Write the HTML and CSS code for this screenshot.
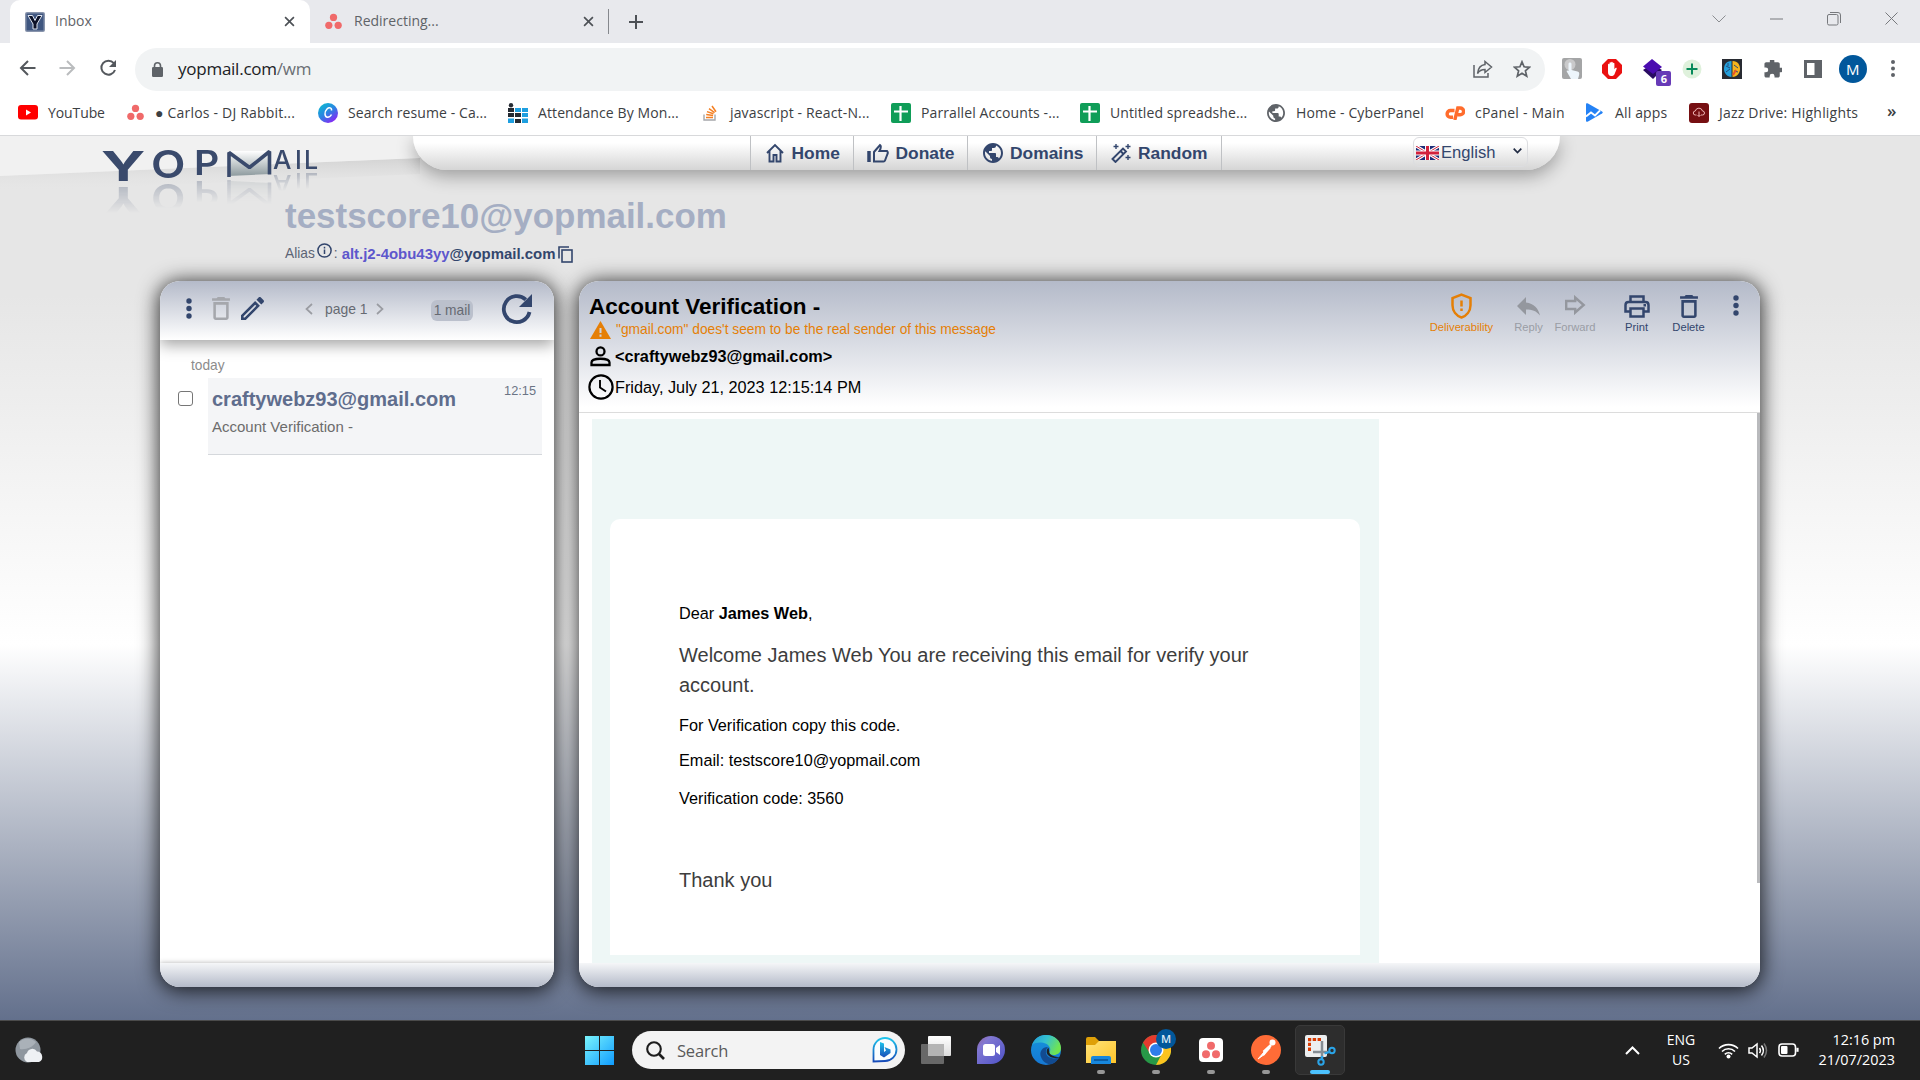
FILE: index.html
```html
<!DOCTYPE html>
<html lang="en">
<head>
<meta charset="utf-8">
<title>Inbox</title>
<link rel="stylesheet" href="styles.css">
</head>
<body>
<svg width="0" height="0" class="defs">
  <defs>
    <symbol id="asana" viewBox="0 0 16 16"><g fill="#f06a6a"><circle cx="8" cy="4.2" r="3.4"/><circle cx="3.6" cy="11.6" r="3.4"/><circle cx="12.4" cy="11.6" r="3.4"/></g></symbol>
    <symbol id="close" viewBox="0 0 10 10"><path d="M1 1l8 8M9 1L1 9" stroke="#4d5156" stroke-width="1.5" fill="none"/></symbol>
    <symbol id="sheet" viewBox="0 0 20 20"><rect width="20" height="20" rx="2" fill="#0f9d58"/><path d="M9.500 3v15M3 8.500h14" stroke="#fff" stroke-width="2.200"/></symbol>
    <symbol id="globe" viewBox="2 2 20 20"><path d="M12 2C6.480 2 2 6.480 2 12s4.480 10 10 10 10-4.480 10-10S17.520 2 12 2zm-1 17.930c-3.950-.490-7-3.850-7-7.930 0-.620.080-1.210.210-1.790L9 15v1c0 1.100.900 2 2 2v1.930zm6.900-2.540c-.260-.810-1-1.390-1.900-1.390h-1v-3c0-.550-.450-1-1-1H8v-2h2c.550 0 1-.450 1-1V7h2c1.100 0 2-.900 2-2v-.410c2.930 1.190 5 4.060 5 7.410 0 2.080-.800 3.970-2.100 5.390z"/></symbol>
    <symbol id="trash" viewBox="5 3 14 18"><path d="M16 9v10H8V9h8m-1.500-6h-5l-1 1H5v2h14V4h-3.500l-1-1zM18 7H6v12c0 1.100.900 2 2 2h8c1.100 0 2-.900 2-2V7z"/></symbol>
    <symbol id="dots" viewBox="0 0 6 21"><circle cx="3" cy="3" r="2.700"/><circle cx="3" cy="10.500" r="2.700"/><circle cx="3" cy="18" r="2.700"/></symbol>
  </defs>
</svg>

<header class="browser">
  <div class="tabs">
    <div class="tab active">
      <svg width="20" height="20"><rect width="20" height="20" rx="2" fill="#8894ac"/><rect x="1.500" y="1.500" width="17" height="17" fill="#3f5680"/><path d="M3 3.500h4.500l2.500 5 2.500-5H17l-5 8.500v5H8v-5z" fill="#0d1227" stroke="#dfe5f0" stroke-width="1"/></svg>
      <span class="tab-title">Inbox</span>
      <svg class="x" width="11" height="11"><use href="#close"/></svg>
    </div>
    <div class="tab idle">
      <svg width="17" height="17"><use href="#asana"/></svg>
      <span class="tab-title">Redirecting...</span>
      <svg class="x" width="11" height="11"><use href="#close"/></svg>
    </div>
    <svg class="plus" width="16" height="16"><path d="M8 1v14M1 8h14" stroke="#4d5156" stroke-width="2"/></svg>
    <div class="window-buttons">
      <svg width="14" height="8"><path d="M.5.5L7 7l6.500-6.500" fill="none" stroke="#8b8d91"/></svg>
      <svg width="13" height="2"><path d="M0 1h13" stroke="#77797d"/></svg>
      <svg width="14" height="14" fill="none" stroke="#77797d"><rect x=".5" y="2.500" width="10.500" height="10.500" rx="1.500"/><path d="M3 .5h8a2.500 2.500 0 0 1 2.500 2.500v8"/></svg>
      <svg width="13" height="13"><path d="M.5.5l12 12M12.500.5l-12 12" stroke="#77797d"/></svg>
    </div>
  </div>

  <div class="toolbar">
    <div class="nav-buttons">
      <svg width="17" height="16" fill="none" stroke="#54585d" stroke-width="2"><path d="M16.500 8H2M9 1L2 8l7 7"/></svg>
      <svg width="17" height="16" fill="none" stroke="#babcbe" stroke-width="2"><path d="M.5 8H15M8 1l7 7-7 7"/></svg>
      <svg width="18" height="18" fill="none" stroke="#54585d" stroke-width="2"><path d="M14.800 4.200A7 7 0 1 0 16 11"/><path d="M17 1v7h-7z" fill="#54585d" stroke="none"/></svg>
    </div>
    <div class="omnibox">
      <svg width="11" height="15"><rect y="5" width="11" height="10" rx="1.200" fill="#5f6368"/><path d="M2.500 6V3.800a3 3 0 0 1 6 0V6" fill="none" stroke="#5f6368" stroke-width="1.600"/></svg>
      <span class="url">yopmail.com<span class="path">/wm</span></span>
      <svg class="share" width="20" height="18" fill="none" stroke="#5f6368" stroke-width="1.500"><path d="M1 5v12h14v-4"/><path d="M12 1.500L18.500 7 12 12.500V9.500C8.500 9.500 6 11 4.500 13.500 5 9 7.500 5 12 4.500z"/></svg>
      <svg width="18" height="18" viewBox="0 0 18 18" fill="none" stroke="#5f6368" stroke-width="1.700"><path d="M9 1.800l2.100 5 5.400.4-4.100 3.600 1.300 5.300L9 13.200l-4.700 2.900 1.300-5.300L1.500 7.200l5.400-.4z"/></svg>
    </div>
    <div class="extensions">
      <div><svg width="20" height="22"><rect width="20" height="21" rx="2" fill="#a4a5a6"/><circle cx="8" cy="6.500" r="5.500" fill="#c9c9ca"/><path d="M6.500 6c0-2 3-2 3 0v6l6 1.500c2 .5 2 2 1.500 4l-1 3.500H9L5 14c-1-1.500.5-2 1.500-1z" fill="#edf5fb"/></svg></div>
      <div><svg width="20" height="20"><path d="M6 0h8l6 6v8l-6 6H6l-6-6V6z" fill="#ea1111"/><path d="M6 9V5.500c0-1 1.500-1 1.500 0V4c0-1 1.600-1 1.600 0v-.5c0-1 1.700-1 1.700 0V4.500c0-1 1.600-1 1.600 0v5.800l1-1.200c.8-.8 1.600 0 1.200.8l-2 5c-.6 1.600-1.700 2-3.200 2C7 17 6 15.500 6 13z" fill="#fff"/></svg></div>
      <div class="stack"><svg width="20" height="20"><path d="M1 11l9-6 10 6-9 9z" fill="#2a0c63"/><path d="M10 0l10 8-9 7L1 7.500z" fill="#4b0cb0"/></svg><b>6</b></div>
      <div><svg width="20" height="20"><circle cx="10" cy="10" r="9.500" fill="#dff1dc"/><path d="M10 4.500v11M4.500 10h11" stroke="#078a5a" stroke-width="2"/></svg></div>
      <div><svg width="20" height="20"><rect width="20" height="20" fill="#282b32"/><path d="M9.500 2C4 2 2 6 2 10s3 8 7.500 8z" fill="#25a0dc"/><path d="M10.500 2C16 2 18 6 18 10s-3 8-7.500 8z" fill="#f6b41c"/><path d="M4 7l4 2M4 13l4-3M12 6l4 3M12 12l4 1M6 4v3" stroke="#264b78"/><path d="M11 16l3-5" stroke="#e8532b" stroke-width="2"/></svg></div>
      <div><svg width="18" height="18" viewBox="1.500 2.500 20 20" fill="#5f6368"><path d="M20.500 11H19V7c0-1.100-.9-2-2-2h-4V3.500a2.500 2.500 0 0 0-5 0V5H4c-1.100 0-2 .9-2 2v3.800h1.500a2.700 2.700 0 0 1 0 5.400H2V20c0 1.100.9 2 2 2h3.800v-1.500a2.700 2.700 0 0 1 5.400 0V22H17c1.100 0 2-.9 2-2v-4h1.500a2.500 2.500 0 0 0 0-5z"/></svg></div>
      <div><svg width="18" height="18"><path fill-rule="evenodd" d="M0 0h18v18H0zM3 3v12h7.500V3z" fill="#5f6368"/></svg></div>
      <div><span class="avatar">M</span></div>
      <div><svg width="4" height="17" fill="#5f6368"><circle cx="2" cy="2" r="2"/><circle cx="2" cy="8.500" r="2"/><circle cx="2" cy="15" r="2"/></svg></div>
    </div>
  </div>

  <div class="bookmarks">
    <div class="bm b1"><svg width="20" height="15"><rect width="20" height="14.500" rx="3" fill="#f00"/><path d="M8 4.500v6l5-3z" fill="#fff"/></svg><span>YouTube</span></div>
    <div class="bm b2"><svg width="17" height="17"><use href="#asana"/></svg><span>● Carlos - DJ Rabbit...</span></div>
    <div class="bm b3"><svg width="20" height="20"><defs><linearGradient id="cv" x1="0" y1="0" x2=".7" y2="1"><stop stop-color="#06c4cc"/><stop offset=".55" stop-color="#2b83e3"/><stop offset="1" stop-color="#8a25f5"/></linearGradient></defs><circle cx="10" cy="10" r="10" fill="url(#cv)"/><path d="M13.500 7.500c.5-3-2.500-3.500-4.500-1.500-3 3-2.500 8 .5 8.200 1.800 0 3.200-1 4-2.700" fill="none" stroke="#fff" stroke-width="1.500"/></svg><span>Search resume - Ca...</span></div>
    <div class="bm b4"><svg width="20" height="20"><g fill="#252b33"><circle cx="3" cy="2.200" r="2.200"/><path d="M0 5h6v4H0zM0 10h6v4H0zM7 10h6v4H7zM7 16h6v4H7z"/></g><path d="M7 5h6v4H7zM14 5h6v4h-6zM14 10h6v4h-6zM0 15.500h6V20H0zM14 15.500h6V20h-6z" fill="#1e9fe0"/></svg><span>Attendance By Mon...</span></div>
    <div class="bm b5"><svg width="16" height="16" fill="none"><path d="M1 9.500V15h11V9.500" stroke="#a5a7aa" stroke-width="1.400"/><path d="M3 12.500h7M3.200 9.600l6.900.8M4 6.600l6.500 2.100M6 3.700l5.600 3.900M9 1l4 5.700" stroke="#f48024" stroke-width="1.500"/></svg><span>javascript - React-N...</span></div>
    <div class="bm b6"><svg width="20" height="20"><use href="#sheet"/></svg><span>Parrallel Accounts -...</span></div>
    <div class="bm b7"><svg width="20" height="20"><use href="#sheet"/></svg><span>Untitled spreadshe...</span></div>
    <div class="bm b8"><svg width="18" height="18" fill="#5f6368"><use href="#globe"/></svg><span>Home - CyberPanel</span></div>
    <div class="bm b9"><svg width="20" height="14" fill="none" stroke="#ff6c2c" stroke-width="3.400"><path d="M9.500 4.500H5.500a3.300 3.300 0 0 0 0 6.800H8"/><path d="M9.800 14L12.800 2h2.400a3.300 3.300 0 0 1 0 6.800h-2.500"/></svg><span>cPanel - Main</span></div>
    <div class="bm b10"><svg width="17" height="19"><path d="M0 1.500C0 0 1 0 2 .5l14 8c1 .6 1 1.400 0 2l-14 8c-1 .5-2 .5-2-1z" fill="#2482f5"/><path d="M0 13.500l5-4 4 3 5-5" fill="none" stroke="#fff" stroke-width="1.800"/></svg><span>All apps</span></div>
    <div class="bm b11"><svg width="20" height="20"><rect width="20" height="20" rx="3" fill="#760f12"/><path d="M7.500 12H6.300a2 2 0 0 1 0-4 3.700 3.700 0 0 1 7.200 0 2 2 0 0 1 0 4H12M10 8.500v5M8.500 12l1.500 1.500 1.500-1.500" fill="none" stroke="#efb5b5"/></svg><span>Jazz Drive: Highlights</span></div>
    <div class="more">»</div>
  </div>
</header>

<main class="page">
  <svg class="swoosh" width="420" height="60"><defs><linearGradient id="sw" x1="0" y1="0" x2="0" y2="1"><stop stop-color="#d3d3d3"/><stop offset="1" stop-color="#e7e7e7" stop-opacity="0"/></linearGradient></defs><path d="M0 40L420 22v16L0 56z" fill="url(#sw)"/><path d="M0 0h420v22L0 40z" fill="#f1f1f1"/></svg>

  <div class="top">
    <div class="logo">
      <span class="ly">Y</span>
      <span class="lo">O</span>
      <span class="lp">P</span>
      <svg class="lm" width="46" height="27"><defs><linearGradient id="env" x1="0" y1="0" x2="0" y2="1"><stop stop-color="#fff"/><stop offset="1" stop-color="#8d9a9e"/></linearGradient></defs><path d="M1 1h43v23L1 26z" fill="url(#env)"/><path d="M2 27V2.500l20.500 15L42.500 1.500V24.500" fill="none" stroke="#3a4a6c" stroke-width="3.600" stroke-linejoin="bevel"/></svg>
      <span class="la">A</span>
      <span class="li">I</span>
      <span class="ll">L</span>
    </div>
    <nav class="menu">
      <a class="m1"><svg width="18" height="20" fill="none" stroke="#33466d" stroke-width="1.900"><path d="M1 10l8-8 8 8M3.500 8v10.500h4V12h3v6.500h4V8"/></svg>Home</a>
      <a class="m2"><svg width="22" height="20" fill="none" stroke="#33466d" stroke-width="2"><path d="M2 8v11" stroke-width="3.500"/><path d="M7 9l6-7c1.500 1 1 3-.5 6H20c1 1 1 2 .5 3l-2.500 6.500c-.3.800-1 1-1.500 1H7z"/></svg>Donate</a>
      <a class="m3"><svg width="20" height="20" fill="#33466d"><use href="#globe"/></svg>Domains</a>
      <a class="m4"><svg width="20" height="20" fill="none" stroke="#33466d" stroke-width="1.900"><path d="M1.500 16L12 5.500l3 3L4.500 19z"/><path d="M9.500 8l3 3"/><path d="M5 1v5M2.500 3.500h5M17 1v5M14.500 3.500h5M17 12v5M14.500 14.500h5" stroke-width="1.400"/></svg>Random</a>
      <div class="lang"><svg width="23" height="14" viewBox="0 0 23 14"><rect width="23" height="14" fill="#1d2d78"/><path d="M0 0l23 14M23 0L0 14" stroke="#fff" stroke-width="3.200"/><path d="M0 0l23 14M23 0L0 14" stroke="#d2213c" stroke-width="1"/><path d="M11.500 0v14M0 7h23" stroke="#fff" stroke-width="5"/><path d="M11.500 0v14M0 7h23" stroke="#d2213c" stroke-width="3"/></svg><span>English</span><svg class="chev" width="9" height="6" fill="none" stroke="#222c44" stroke-width="1.700"><path d="M.7.7l3.800 3.800L8.300.7"/></svg></div>
    </nav>
  </div>

  <div class="account">
    <h1>testscore10@yopmail.com</h1>
    <div class="alias"><span>Alias</span><svg class="info" width="15" height="15" fill="none" stroke="#33466d" stroke-width="1.500"><circle cx="7.500" cy="7.500" r="6.600"/><path d="M7.500 6.500v4.500M7.500 3.800v1.600"/></svg><span>:</span><b><i>alt.j2-4obu43yy</i>@yopmail.com</b><svg class="copy" width="15" height="17" fill="none" stroke="#33466d" stroke-width="1.600"><path d="M1 12.500V1h10"/><rect x="4" y="4" width="10" height="12"/></svg></div>
  </div>

  <div class="columns">
    <section class="panel inbox">
      <div class="inbox-head">
        <svg class="i-dots" width="6" height="21" fill="#33466d"><use href="#dots"/></svg>
        <svg class="i-trash" width="18" height="23" fill="#a5a7ac"><use href="#trash"/></svg>
        <svg class="i-pen" width="23" height="23" viewBox="3 3 18 18" fill="#33466d"><path d="M14.060 9.020l.92.920L5.920 19H5v-.920l9.060-9.060M17.660 3c-.25 0-.51.1-.7.290l-1.830 1.830 3.750 3.750 1.830-1.830c.39-.39.39-1.020 0-1.410l-2.340-2.340c-.2-.2-.45-.29-.71-.29zm-3.600 3.190L3 17.250V21h3.750L17.810 9.940l-3.750-3.750z"/></svg>
        <svg class="i-prev" width="8" height="12" fill="none" stroke="#9a9ca2" stroke-width="1.700"><path d="M7 1L1.500 6 7 11"/></svg>
        <span class="i-page">page 1</span>
        <svg class="i-next" width="8" height="12" fill="none" stroke="#9a9ca2" stroke-width="1.700"><path d="M1 1l5.500 5L1 11"/></svg>
        <span class="i-count">1 mail</span>
        <svg class="i-reload" width="32" height="32" viewBox="0 0 32 32"><path d="M24.800 6.700A13 13 0 1 0 28.500 19" fill="none" stroke="#33466d" stroke-width="3.800"/><path d="M31 1v13H18z" fill="#33466d"/></svg>
      </div>
      <div class="inbox-body">
        <div class="day">today</div>
        <div class="row">
          <span class="check"></span>
          <div class="mail">
            <div class="mail-top"><b>craftywebz93@gmail.com</b><time>12:15</time></div>
            <p>Account Verification -</p>
          </div>
        </div>
      </div>
      <div class="panel-foot"></div>
    </section>

    <section class="panel reader">
      <div class="reader-head">
        <div class="meta">
          <h2>Account Verification -</h2>
          <div class="warn"><svg width="21" height="18"><path d="M10.500 0L21 18H0z" fill="#e57f06"/><path d="M10.500 7v5M10.500 13.500v2.300" stroke="#d0d4dd" stroke-width="2"/></svg>"gmail.com" does't seem to be the real sender of this message</div>
          <div class="from"><svg width="21" height="21" fill="none" stroke="#000" stroke-width="2.300"><circle cx="10.500" cy="5.400" r="4"/><path d="M1.500 19v-2.500c0-5 18-5 18 0V19z"/></svg><b>&lt;craftywebz93@gmail.com&gt;</b></div>
          <div class="date"><svg width="26" height="26" fill="none" stroke="#000" stroke-width="2.200"><circle cx="13" cy="13" r="11.600"/><path d="M12 6v7.500l6 4" stroke-width="1.900"/></svg>Friday, July 21, 2023 12:15:14 PM</div>
        </div>
        <div class="actions">
          <div class="act a1"><svg width="21" height="26" fill="none" stroke="#e57f06" stroke-width="2.500"><path d="M10.500 1.600l9 3.600v7c0 6-4 10.500-9 12.300-5-1.800-9-6.300-9-12.300v-7z"/><path d="M10.500 7.500v6M10.500 15.500v2.500"/></svg>Deliverability</div>
          <div class="act a2"><svg width="23" height="19" fill="#94979e"><path d="M9 5.500V0L0 9l9 9v-5.500c6 0 10.500 1.500 14 6-1.500-7-6-12-14-13z"/></svg>Reply</div>
          <div class="act a3"><svg width="21" height="20" fill="none" stroke="#94979e" stroke-width="2.400"><path d="M1.200 6h9V2.500l8.500 7.500-8.500 7.500V14h-9z"/></svg>Forward</div>
          <div class="act a4"><svg width="26" height="23" fill="none" stroke="#33466d" stroke-width="2.500"><path d="M6.500 7V1.500h13V7M6 16.500H1.500V10c0-2 1-3 3-3h17c2 0 3 1 3 3v6.500H20"/><path d="M6.500 13.500h13v8h-13z"/><path d="M19.500 10.200h2.500"/></svg>Print</div>
          <div class="act a5"><svg width="18" height="23" fill="#33466d"><use href="#trash"/></svg>Delete</div>
          <svg class="kebab" width="6" height="21" fill="#33466d"><use href="#dots"/></svg>
        </div>
      </div>
      <div class="reader-body">
        <div class="mint">
          <div class="card">
            <p class="t1">Dear <b>James Web</b>,</p>
            <p class="t2">Welcome James Web You are receiving this email for verify your account.</p>
            <p class="t3">For Verification copy this code.</p>
            <p class="t4">Email: testscore10@yopmail.com</p>
            <p class="t5">Verification code: 3560</p>
            <p class="t6">Thank you</p>
          </div>
        </div>
        <div class="scroll"></div>
      </div>
      <div class="panel-foot"></div>
    </section>
  </div>
</main>

<footer class="taskbar">
  <div class="weather"><svg width="30" height="28"><circle cx="13" cy="13" r="12.500" fill="#8f979f"/><path d="M4 5a12.500 12.500 0 0 1 17 0c-3 5-10 8-16 7z" fill="#aab1b8"/><path d="M12 25a5 5 0 0 1 0-9 5.500 5.500 0 0 1 10-1.500 5.500 5.500 0 0 1 2 10.500z" fill="#eef1f4"/></svg></div>
  <div class="apps">
    <svg class="win" width="29" height="29"><defs><linearGradient id="wn" x1="0" y1="0" x2="29" y2="29" gradientUnits="userSpaceOnUse"><stop stop-color="#7af4fc"/><stop offset="1" stop-color="#109cff"/></linearGradient></defs><path d="M0 0h14v14H0zM15 0h14v14H15zM0 15h14v14H0zM15 15h14v14H15z" fill="url(#wn)"/></svg>
    <div class="search"><svg width="19" height="19" fill="none" stroke="#1d1d1d" stroke-width="2.100"><circle cx="8" cy="8" r="6.800"/><path d="M13 13l5 5" stroke-width="2.600"/></svg><span>Search</span>
      <svg class="bing" width="26" height="26"><defs><linearGradient id="bg" x1="0" y1="0" x2="0" y2="1"><stop stop-color="#1fc5ec"/><stop offset="1" stop-color="#174bb8"/></linearGradient></defs><path d="M1.500 24.500V12.500A11.500 11.500 0 1 1 13 24z" fill="#fafdff" stroke="url(#bg)" stroke-width="1.800"/><path d="M8 5l4 1.500v8.500l2-1.500-1.500-3.500 6 2.500v3.500L12 20.500 8 18z" fill="url(#bg)"/></svg></div>
    <div class="app"><svg width="30" height="28"><defs><linearGradient id="tv" x1="0" y1="0" x2="0" y2="1"><stop stop-color="#fff"/><stop offset="1" stop-color="#dcdcdc"/></linearGradient></defs><rect x="7" width="23" height="20" rx="1" fill="url(#tv)"/><rect y="8" width="23" height="20" rx="1" fill="#686868"/><path d="M7 8h16v12H7z" fill="#b4b4b4"/></svg></div>
    <div class="app"><svg width="30" height="29"><defs><linearGradient id="ch" x1="0" y1="0" x2="1" y2="1"><stop stop-color="#94619b"/><stop offset=".25" stop-color="#8278d2"/><stop offset="1" stop-color="#4c51c7"/></linearGradient></defs><path d="M1 28V14A14 14 0 1 1 15 28z" fill="url(#ch)"/><rect x="7" y="8" width="12" height="12" rx="2.500" fill="#fff"/><path d="M20 12l4-3v10l-4-3z" fill="#fff"/></svg></div>
    <div class="app"><svg width="30" height="30" viewBox="0 0 30 30"><defs><linearGradient id="e1" x1="0" y1="0" x2="1" y2=".4"><stop stop-color="#2099d8"/><stop offset=".5" stop-color="#35c1d0"/><stop offset="1" stop-color="#6fe452"/></linearGradient><linearGradient id="e2" x1="0" y1="0" x2="0" y2="1"><stop stop-color="#1593db"/><stop offset="1" stop-color="#1678d4"/></linearGradient></defs><circle cx="15" cy="15" r="15" fill="url(#e2)"/><path d="M28 22c-5 3-12 1-13-4-.6-3 1-5 2-6-6 0-9 5-7 10 2 6 8 8 11 7 3-1 6-4 7-7z" fill="#124b91"/><path d="M1 10C4 2 10 0 15 0c9 0 15 6 15 13 0 5-4 7-7 7s-5-1-5-2 2-2 1-5c-2-6-13-7-18-3z" fill="url(#e1)"/><path d="M17.500 12.500c-2 2-2.500 4.500-1 7 3 4 9 4 12.500 2.500-3 .5-9-1-10.500-4z" fill="#202020"/></svg></div>
    <div class="app run"><svg width="30" height="27"><defs><linearGradient id="fo" x1="0" y1="0" x2="1" y2="1"><stop stop-color="#ffe37a"/><stop offset="1" stop-color="#ffc529"/></linearGradient></defs><path d="M0 2q0-2 2-2h7l4 4h15q2 0 2 2v8H0z" fill="#dfa008"/><path d="M0 8h9l4-4h17v22H0z" fill="url(#fo)"/><path d="M5 27v-6q0-2 2-2h16q2 0 2 2v6z" fill="#1787dd"/><path d="M8 23h14" stroke="#0a4f91" stroke-width="1.500"/></svg></div>
    <div class="app run chrome"><svg width="30" height="30" viewBox="0 0 30 30"><circle cx="15" cy="15" r="15" fill="#279847"/><path d="M2 7.500A15 15 0 0 1 28 7.500L15 8 9 18.500z" fill="#e33b2e"/><path d="M28 7.500A15 15 0 0 1 15 30l6-11.500L15 8z" fill="#fcc31e"/><circle cx="15" cy="15" r="7.500" fill="#fff"/><circle cx="15" cy="15" r="6" fill="#2e7dea"/></svg><b>M</b></div>
    <div class="app run"><svg width="24" height="24"><rect width="24" height="24" rx="4" fill="#fff"/><g fill="#f06a6a"><circle cx="12" cy="7.800" r="4"/><circle cx="7" cy="16.300" r="4"/><circle cx="17" cy="16.300" r="4"/></g></svg></div>
    <div class="app run"><svg width="30" height="30"><circle cx="15" cy="15" r="15" fill="#ff6c37"/><circle cx="21.500" cy="7.500" r="3" fill="#fff"/><path d="M20 10l-7.500 7M19 12l-7 8" stroke="#fff" stroke-width="2.500"/><path d="M13 17l-6 7 7-5z" fill="#fff" stroke="#fff"/></svg></div>
    <div class="app snip"><svg width="31" height="31" fill="none"><rect width="22" height="22" rx="2" fill="#eceeef"/><path d="M4.500 16V4.500h12" stroke="#d83b01" stroke-width="3" stroke-dasharray="3.400 1.500"/><path d="M17 6v17M8 17h15" stroke="#858d94" stroke-width="2.500"/><circle cx="27" cy="15.500" r="2.700" stroke="#2aa4e8" stroke-width="2"/><circle cx="16" cy="27" r="2.700" stroke="#2aa4e8" stroke-width="2"/><path d="M24.500 17l-5 1.500M17 24.500V21" stroke="#2aa4e8" stroke-width="2.300"/></svg></div>
  </div>
  <div class="tray">
    <svg class="up" width="15" height="9" fill="none" stroke="#fff" stroke-width="2"><path d="M1 8l6.500-6.500L14 8"/></svg>
    <div class="kb">ENG<br>US</div>
    <svg class="wifi" width="21" height="17" fill="none" stroke="#fff" stroke-width="1.600"><path d="M1 6.500a13.500 13.500 0 0 1 19 0M4 9.500a9.200 9.200 0 0 1 13 0M6.800 12.300a5.400 5.400 0 0 1 7.400 0"/><circle cx="10.500" cy="14.500" r="2" fill="#fff" stroke="none"/></svg>
    <svg class="vol" width="21" height="17" fill="none" stroke="#fff" stroke-width="1.500"><path d="M1 6v5h3l5 4V2L4 6z"/><path d="M11.500 6q1.800 2.500 0 5M13.500 3.500q3.800 5 0 10"/><path d="M16 1.500q5 7 0 14" stroke="#777"/></svg>
    <svg class="bat" width="21" height="14" fill="none" stroke="#fff" stroke-width="1.600"><rect x="1" y="1" width="16.500" height="12" rx="3"/><rect x="3" y="3" width="6.500" height="8" rx="1" fill="#fff" stroke="none"/><path d="M19.500 4.800v4" stroke-width="2.200"/></svg>
    <div class="clock">12:16 pm<br>21/07/2023</div>
  </div>
</footer>
</body>
</html>
```
FILE: styles.css
```css
* { box-sizing: border-box; }
body { margin: 0; width: 1920px; height: 1080px; overflow: hidden; display: flex; flex-direction: column; font-family: "Liberation Sans", Arial, sans-serif; background: #fff; }
h1, h2, p { margin: 0; }
svg { display: block; flex: none; }
.defs { position: absolute; }

/* browser chrome */
.browser { height: 136px; flex: none; border-bottom: 1px solid #d8d9db; font-family: "Open Sans", "Noto Sans", sans-serif; color: #3c4043; }
.tabs { height: 43px; background: #e8e9ed; display: flex; align-items: center; padding-left: 10px; }
.tab { height: 43px; display: flex; align-items: center; font-size: 14px; color: #5f6368; }
.tab .x { margin-left: auto; }
.tab-title { padding-bottom: 2px; }
.tab.active { width: 300px; background: #fff; border-radius: 10px 10px 0 0; padding: 0 15px; gap: 10px; }
.tab.idle { width: 299px; height: 25px; border-right: 1px solid #85888d; padding: 0 14px 0 15px; gap: 12px; }
.plus { margin-left: 19px; }
.window-buttons { margin-left: auto; display: flex; align-items: center; width: 208px; gap: 44px; padding-bottom: 6px; }
.toolbar { height: 52px; display: flex; align-items: center; padding-bottom: 1px; }
.nav-buttons { width: 135px; display: flex; gap: 23px; padding: 0 0 2px 19px; align-items: center; }
.omnibox { width: 1410px; height: 43px; margin-top: 1px; border-radius: 22px; background: #f1f3f4; display: flex; align-items: center; padding: 0 14px 0 17px; }
.url { margin-left: 15px; font-size: 17px; letter-spacing: -.25px; color: #202124; padding-bottom: 1px; }
.url .path { color: #6a6e73; }
.share { margin-left: auto; margin-right: 20px; }
.extensions { display: flex; padding-left: 7px; }
.extensions > div { width: 40.100px; height: 36px; display: flex; align-items: center; justify-content: center; position: relative; }
.stack b { position: absolute; right: 1px; bottom: 1px; width: 15px; height: 15px; background: #673ab7; color: #fff; border-radius: 2px; font-size: 11px; line-height: 15px; text-align: center; }
.avatar { width: 28px; height: 28px; flex: none; border-radius: 50%; background: #01579b; color: #fff; font-size: 15px; line-height: 28px; text-align: center; }
.bookmarks { height: 39px; display: flex; align-items: center; padding: 0 0 4px 18px; font-size: 14px; letter-spacing: .1px; }
.bm { display: flex; align-items: center; gap: 10px; white-space: nowrap; flex: none; }
.bm span { padding-bottom: 1px; }
.b1 { width: 109px; letter-spacing: -.1px; }
.b2 { width: 191px; gap: 11px; letter-spacing: .2px; }
.b3 { width: 190px; }
.b4 { width: 195px; }
.b5 { width: 188px; gap: 11px; letter-spacing: .15px; }
.b6 { width: 189px; }
.b7 { width: 187px; }
.b8 { width: 178px; gap: 11px; letter-spacing: .15px; }
.b9 { width: 141px; letter-spacing: .2px; }
.b10 { width: 103px; gap: 12px; letter-spacing: .15px; }
.b11 { width: 198px; letter-spacing: .2px; }
.more { font-size: 17px; line-height: 20px; font-weight: 600; padding-bottom: 3px; }

/* page */
.page { position: relative; height: 884px; flex: none; background: linear-gradient(180deg, #e6e6e6 0, #e6e6e6 18%, #fff 57.500%, #63708c 100%); color: #33466d; }
.swoosh { position: absolute; left: 0; top: 0; }
.top { position: relative; display: flex; height: 60px; padding-left: 98px; }
.logo { width: 230px; margin-right: 85px; height: 60px; display: grid; grid-template-columns: 50px 43px 33px 46px 22px 9px 20px; align-items: start; padding-left: 3px; font-family: Inter, sans-serif; color: #3a4a6c; }
.logo span { display: block; line-height: .727em; width: max-content; transform-origin: 0 0; font-weight: 600; -webkit-box-reflect: below 4px linear-gradient(transparent 10%, rgba(0, 0, 0, .28)); }
.logo .ly { font-size: 41px; font-weight: 700; margin-top: 16px; transform: scaleX(1.48); }
.logo .lo { font-size: 38px; margin-top: 15px; transform: scaleX(1.18); }
.logo .lp { font-size: 34px; margin-top: 15px; transform: scaleX(1.15); }
.lm { margin-top: 14px; -webkit-box-reflect: below 3px linear-gradient(transparent 10%, rgba(0, 0, 0, .22)); }
.logo .la { font-size: 26px; font-weight: 500; margin-top: 15px; }
.logo .li { font-size: 25px; font-weight: 500; margin-top: 15px; }
.logo .ll { font-size: 25px; font-weight: 500; margin-top: 15px; }
.menu { width: 1147px; height: 34px; border-radius: 0 0 34px 34px; background: linear-gradient(#fff 20%, #d5d5d5); box-shadow: 0 6px 18px rgba(0, 0, 0, .32); clip-path: inset(0 -40px -40px -40px); display: flex; padding-left: 337px; font-size: 17.400px; font-weight: 700; }
.menu a { display: flex; align-items: center; gap: 7.500px; height: 34px; border-left: 1px solid #bfc1c4; }
.m1 { width: 103px; padding-left: 15px; }
.menu .m2 { width: 114px; padding-left: 13px; gap: 6.500px; }
.menu .m3 { width: 129px; padding-left: 15px; gap: 7px; }
.menu .m4 { width: 126px; padding-left: 14px; border-right: 1px solid #bfc1c4; gap: 7px; }
.lang { margin: 1px 0 0 191px; width: 115px; height: 30px; border: 1px solid #dcdde0; border-radius: 6px; display: flex; align-items: center; padding: 1px 5px 0 2px; gap: 2px; font-weight: 400; font-size: 16.600px; }
.chev { margin-left: auto; margin-top: -4px; }
.account { padding-left: 285px; height: 85px; position: relative; }
.account h1 { font-size: 34.950px; line-height: 40px; color: #a5aec3; }
.alias { display: flex; align-items: center; font-size: 13.750px; line-height: 20px; margin-top: 8px; color: #5c6475; }
.alias b { font-size: 14.950px; margin-left: 4px; color: #33466d; }
.alias i { font-style: normal; color: #5d57cc; }
.info { margin: -8px 2px 0 2px; }
.copy { margin-left: 3px; }
.columns { display: flex; gap: 25px; padding-left: 160px; }
.panel { height: 706px; border-radius: 20px; overflow: hidden; display: flex; flex-direction: column; background: #fff; box-shadow: 0 2px 20px 2px rgba(0, 0, 0, .78); }
.panel-foot { height: 24px; flex: none; background: linear-gradient(#f5f6f8, #b4bac9); position: relative; }
.inbox { width: 394px; }
.inbox .panel-foot { box-shadow: 0 0 5px rgba(0, 0, 0, .3); }
.inbox-head { height: 59px; flex: none; background: linear-gradient(#b4bac9, #fff); box-shadow: 0 5px 14px rgba(0, 0, 0, .36); display: flex; align-items: center; padding: 0 0 4px 25.500px; color: #666a72; z-index: 1; }
.i-dots { margin-right: 20.500px; }
.i-pen { margin-left: 11px; }
.i-prev { margin-left: 41px; }
.i-page { margin-left: 11px; font-size: 13.900px; width: 43px; flex: none; white-space: nowrap; padding-left: 1px; }
.i-next { margin-left: 9px; }
.i-count { margin: 4px 28px 0 47px; width: 42px; flex: none; height: 21px; line-height: 21px; border-radius: 6px; background: #bbc0cc; text-align: center; font-size: 13.750px; white-space: nowrap; }
.inbox-body { flex: 1; }
.day { font-size: 13.750px; line-height: 16px; color: #8c8c8c; padding: 18px 0 4px 31px; }
.row { display: flex; }
.check { width: 15px; height: 15px; border: 1.500px solid #767676; border-radius: 3px; margin: 13px 15px 0 18px; background: #fff; }
.mail { width: 334px; height: 77px; background: #f4f5f7; border-bottom: 1px solid #d5d8dc; padding: 9px 6px 0 4px; color: #6c6c6c; }
.mail-top { display: flex; justify-content: space-between; }
.mail b { font-size: 20px; line-height: 24px; color: #5f6d8d; }
.mail time { font-size: 12.750px; line-height: 14px; margin-top: -3px; color: #6b7485; }
.mail p { font-size: 15px; line-height: 18px; margin-top: 7px; }

.reader { width: 1181px; }
.reader-head { height: 132px; flex: none; display: flex; justify-content: space-between; background: linear-gradient(#b4bac9, #fff 96%); border-bottom: 1px solid #dcdcdc; color: #000; }
.meta { padding: 13px 0 0 10px; }
.meta h2 { font-size: 22.500px; line-height: 25px; }
.meta div { display: flex; align-items: center; white-space: nowrap; }
.warn { font-size: 13.750px; gap: 5px; color: #e57f06; height: 21px; margin-left: 1px; }
.from { font-size: 16.250px; height: 33px; gap: 4px; margin-left: 1px; }
.date { font-size: 16.250px; height: 28px; gap: 1px; margin-left: -1px; }
.actions { display: flex; padding: 12px 21.500px 0 0; font-size: 11.200px; color: #33466d; }
.act { display: flex; flex-direction: column; align-items: center; justify-content: space-between; height: 40px; }
.act svg { margin: 0 auto auto; }
.act.a2 svg { margin-top: 4px; }
.act.a3 svg { margin-top: 2px; }
.act.a4 svg, .act.a5 svg { margin-top: 2px; }
.a1 { width: 64px; color: #e57f06; margin-right: 15px; }
.a2 { width: 40px; color: #9a9da5; }
.a3 { width: 53px; color: #9a9da5; }
.a4 { width: 70px; }
.a5 { width: 34px; }
.kebab { margin: 2px 0 0 27px; }
.reader-body { flex: 1; display: flex; justify-content: space-between; min-height: 0; }
.mint { width: 787px; margin: 6px 0 0 13px; background: #eef7f6; padding: 100px 19px 8px 18px; }
.card { height: 436px; background: #fff; border-radius: 10px 10px 0 0; padding: 84px 69px 0; color: #000; font-size: 16.250px; line-height: 20px; }
.t2, .t6 { font-size: 20px; line-height: 30px; color: #3d3d3d; }
.t2 { margin-top: 17px; }
.t3 { margin-top: 15px; }
.t4 { margin-top: 15px; }
.t5 { margin-top: 18px; }
.t6 { margin-top: 57px; }
.scroll { width: 3px; height: 470px; background: #b9babd; }

/* taskbar */
.taskbar { height: 60px; flex: none; background: #202020; border-top: 1px solid #4b4b4b; display: flex; align-items: center; color: #fff; font-family: "Open Sans", "Noto Sans", sans-serif; }
.weather { width: 585px; padding-left: 15px; }
.apps { display: flex; align-items: center; padding-bottom: 1px; }
.search { margin: 0 3px 0 18px; width: 273px; height: 38px; border-radius: 19px; background: #f3f3f3; color: #5a5a5a; font-size: 16.500px; letter-spacing: -.2px; display: flex; align-items: center; padding: 0 7px 0 14px; gap: 12px; }
.bing { margin-left: auto; }
.app { width: 55px; height: 50px; display: flex; align-items: center; justify-content: center; position: relative; }
.run::after, .snip::after { content: ""; position: absolute; bottom: 1px; width: 8px; height: 4px; border-radius: 2px; background: #979797; }
.snip { width: 50px; margin-left: 2px; background: #2d2d2d; border: 1px solid #393939; border-radius: 5px; }
.snip::after { width: 20px; background: #4cc2ff; bottom: 0; }
.chrome b { position: absolute; left: 28px; top: 4px; width: 20px; height: 20px; border-radius: 50%; background: #01579b; color: #dbe9f5; font-size: 11px; font-weight: 600; line-height: 20px; text-align: center; }
.tray { margin-left: auto; display: flex; align-items: center; padding: 0 25px 1px 0; font-size: 14px; line-height: 20px; }
.kb { text-align: center; width: 40px; margin: 0 17px 0 21px; }
.vol { margin: 0 9px; }
.clock { width: 84px; margin-left: 12px; text-align: right; font-size: 14.400px; white-space: nowrap; }
```
